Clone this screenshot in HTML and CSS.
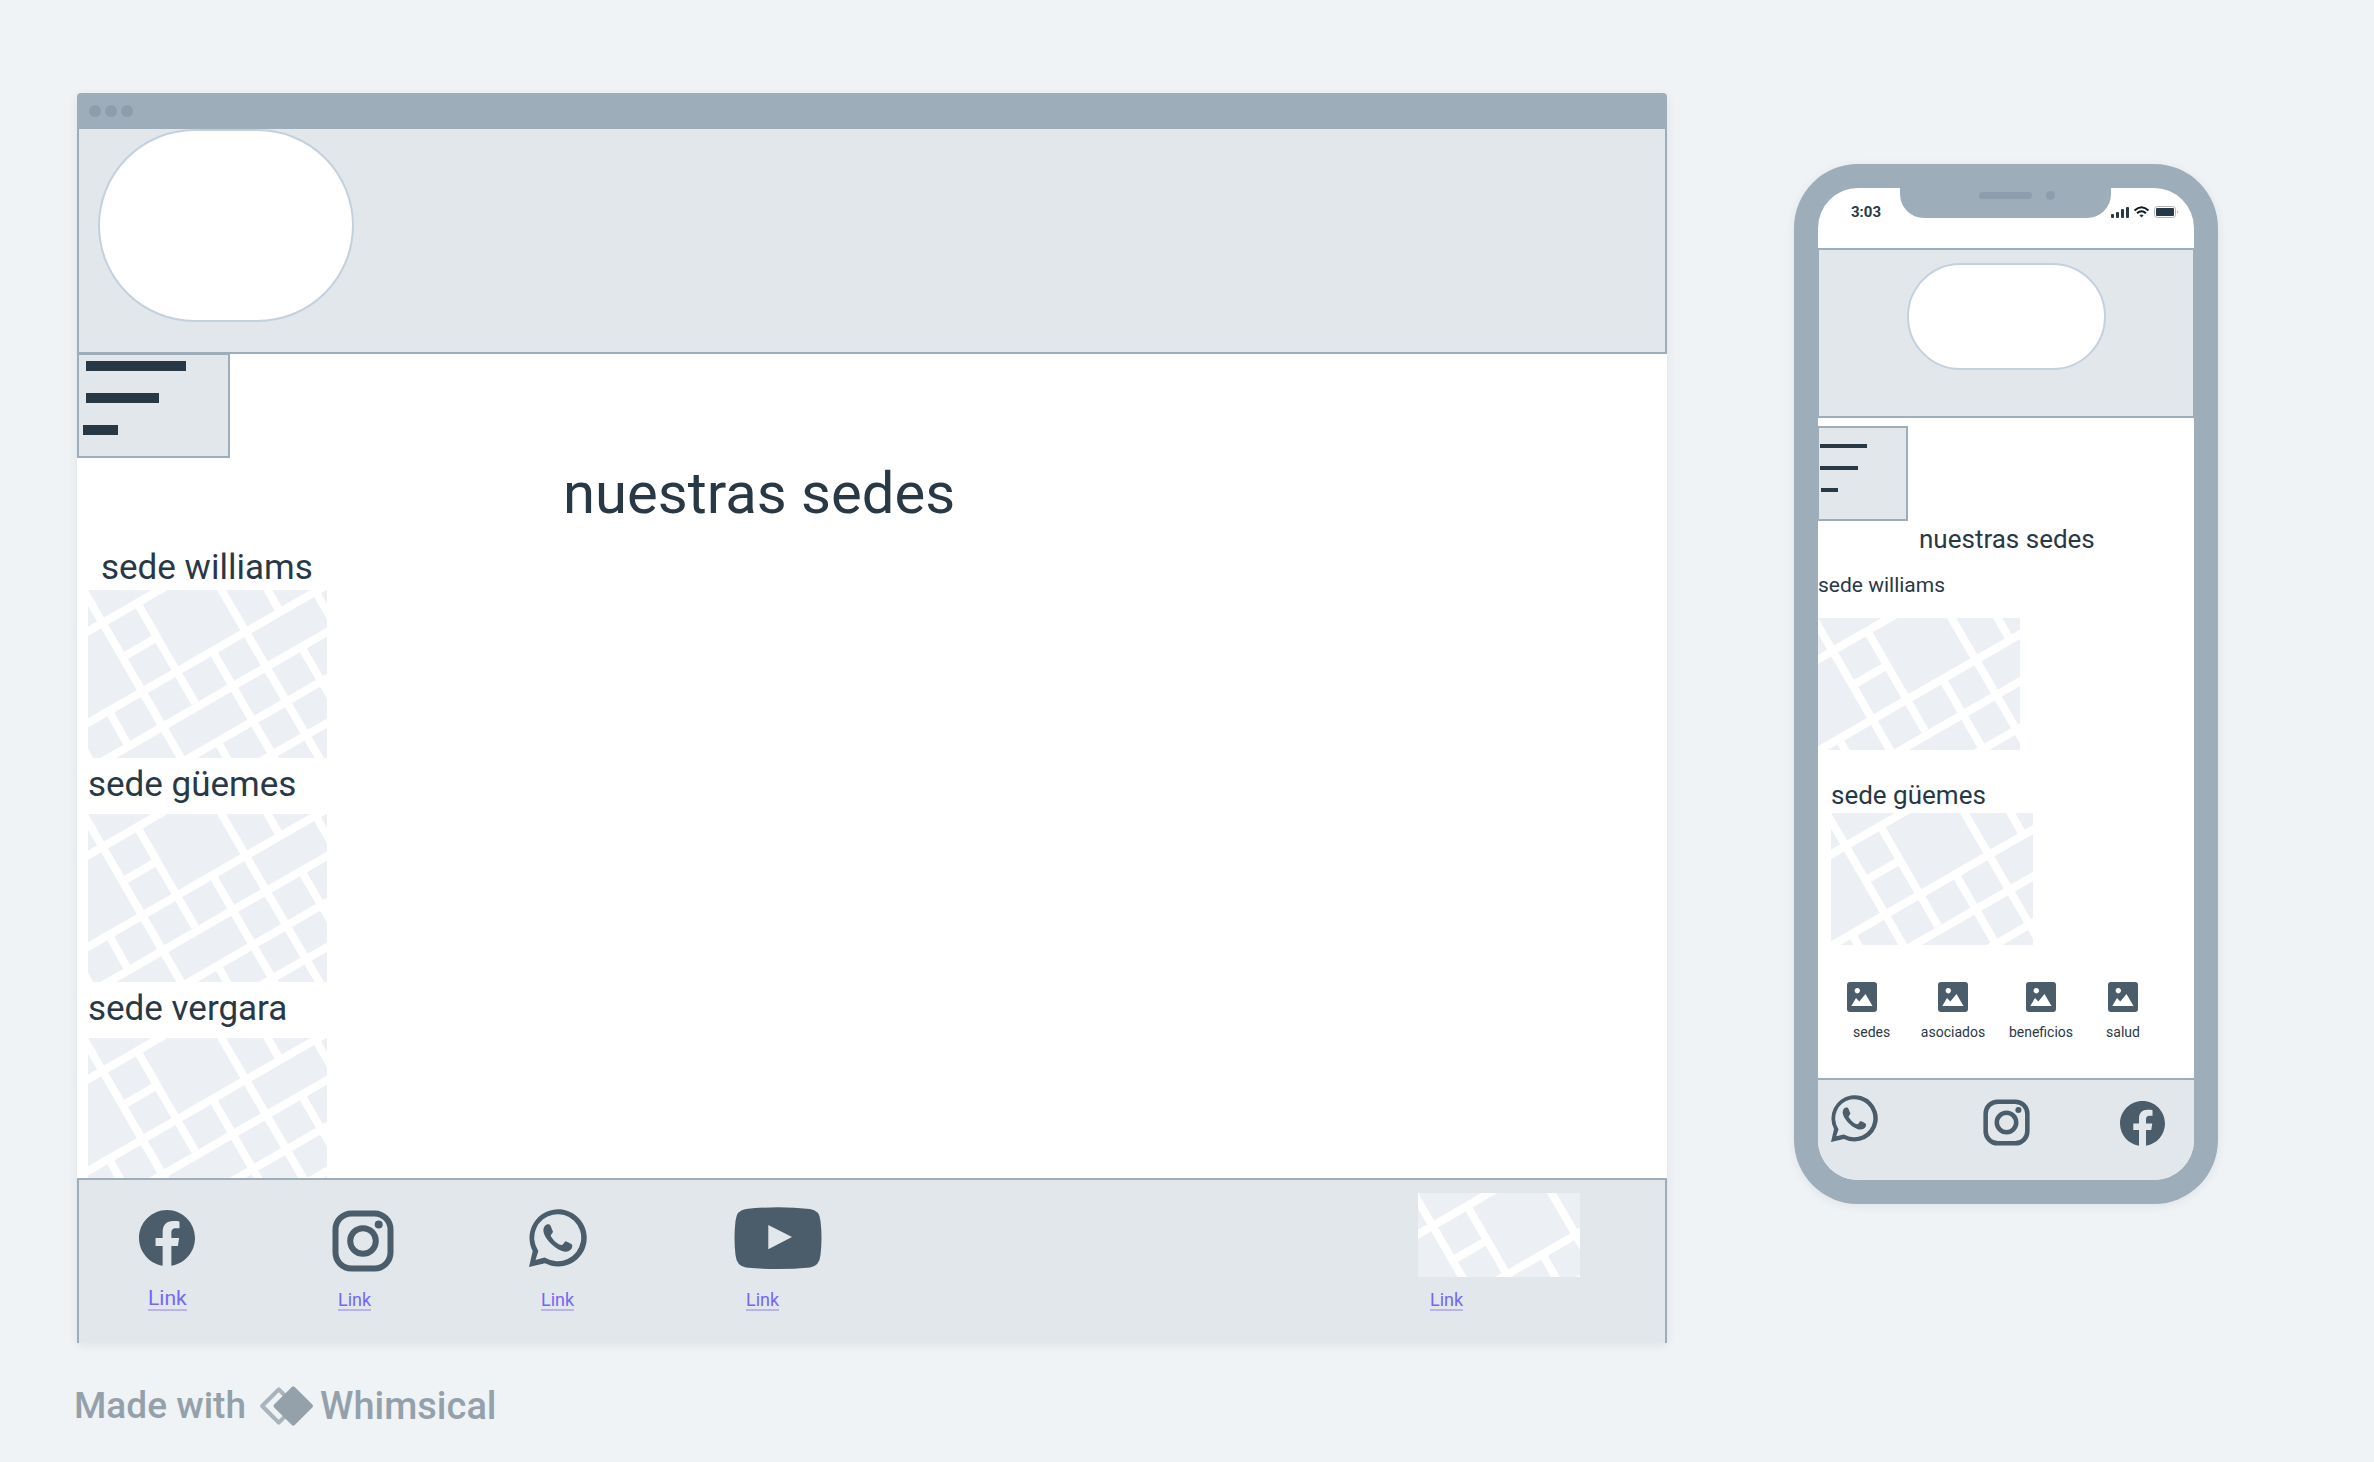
FILE: index.html
```
<!DOCTYPE html>
<html lang="es">
<head>
<meta charset="utf-8">
<title>Nuestras sedes</title>
<meta name="viewport" content="width=device-width, initial-scale=1">
<link rel="stylesheet" href="styles.css">
</head>
<body>
<svg class="defs" aria-hidden="true">
  <symbol id="map" viewBox="0 0 239 168" preserveAspectRatio="xMinYMin slice">
    <rect width="239" height="168" fill="#eceff4"/>
    <g stroke="#fff" stroke-width="8" fill="none">
      <path d="M-7 45.300 83 -6.600M-7 137 239 -5M10 174 246 38M91 174 246 84M167 174.500 246 129M36 66.500 68 48"/>
      <path d="M-8 -6 97 175M51 16 107 113M130 -6 236 176M125.500 63 188 171M178 -3 191 20M226 -1 242 26.500M214 58 242 106M22 123 40 155M130 152 142 174M-4 160 5 176"/>
    </g>
  </symbol>
  <symbol id="facebook" viewBox="2 2 20 20"><path d="M12.001 2.002c-5.522 0-9.999 4.477-9.999 9.999 0 4.990 3.656 9.126 8.437 9.879v-6.988h-2.540v-2.891h2.540V9.798c0-2.508 1.493-3.891 3.776-3.891 1.094 0 2.240.195 2.240.195v2.459h-1.264c-1.240 0-1.628.772-1.628 1.563v1.875h2.771l-.443 2.891h-2.328v6.988C18.344 21.129 22 16.992 22 12.001c0-5.522-4.477-9.999-9.999-9.999z"/></symbol>
  <symbol id="instagram" viewBox="0 0 62 62"><g fill="none" stroke="currentColor" stroke-width="6"><rect x="3.500" y="3.500" width="55" height="55" rx="16"/><circle cx="31" cy="31" r="12.800"/></g><circle cx="46.700" cy="14.600" r="4"/></symbol>
  <symbol id="whatsapp" viewBox="0 0 58 58"><path fill-rule="evenodd" d="M0 58 3.700 42A28.600 28.600 0 1 1 16 54.300ZM6.500 51 15.500 48.600 16.700 48.900A23.500 23.500 0 1 0 9 41.500L9.300 42.300Z"/><path d="M14.400 21.500C14.400 17.500 17 15 19.600 15.300 21.300 15.400 21.700 17 24 22.800 23.300 25 21.500 25.500 21.800 27 24.500 31.500 28.500 35.500 32.500 36 34 36 34.800 33.500 36.400 32.200 38 32.500 41 34.300 43 35.600 44.300 38.500 41.500 42.800 36.500 42.700 28 42.500 14.600 29.500 14.400 21.500Z"/></symbol>
  <symbol id="image" viewBox="0 0 30 30"><path fill-rule="evenodd" d="M3 0H27a3 3 0 0 1 3 3V27a3 3 0 0 1-3 3H3a3 3 0 0 1-3-3V3a3 3 0 0 1 3-3ZM10.300 6a2.700 2.700 0 1 0 .01 0ZM4.300 24H25.500L18.500 12 12.300 19.500 9 16Z"/></symbol>
</svg>

<main class="board">
  <section class="browser">
    <div class="titlebar"><i></i><i></i><i></i></div>
    <header class="hero"><div class="logo"></div></header>
    <div class="content">
      <button class="menu" type="button" aria-label="Menú"><i></i><i></i><i></i></button>
      <h1 class="title">nuestras sedes</h1>
      <div class="offices">
        <h2 class="office office-first">sede williams</h2>
        <svg class="map"><use href="#map" width="239" height="168"/></svg>
        <h2 class="office">sede güemes</h2>
        <svg class="map"><use href="#map" width="239" height="168"/></svg>
        <h2 class="office">sede vergara</h2>
        <svg class="map map-cut"><use href="#map" width="239" height="168"/></svg>
      </div>
    </div>
    <footer class="social">
      <div class="network network-large"><svg class="i-facebook"><use href="#facebook"/></svg><a href="#">Link</a></div>
      <div class="network network-near"><svg class="i-instagram"><use href="#instagram"/></svg><a href="#">Link</a></div>
      <div class="network"><svg class="i-whatsapp"><use href="#whatsapp"/></svg><a href="#">Link</a></div>
      <div class="network"><svg class="i-youtube" viewBox="0 0 88 62"><path fill-rule="evenodd" d="M12 2Q44-1.500 76 2 85.500 3 86.500 14 88.500 31 86.500 48 85.500 59 76 60.500 44 63.500 12 60.500 2.500 59 1.500 48-.5 31 1.500 14 2.500 3 12 2ZM34.300 18V42.300L58 30Z"/></svg><a href="#">Link</a></div>
      <div class="network"><svg class="map map-small"><use href="#map" width="239" height="168"/></svg><a href="#">Link</a></div>
    </footer>
  </section>

  <section class="phone">
    <div class="notch"><i class="speaker"></i><i class="camera"></i></div>
    <div class="screen">
      <div class="status">
        <time>3:03</time>
        <svg class="signals" viewBox="0 0 68 14" fill="#111a23">
          <rect x="0" y="9" width="3" height="4" rx="1"/><rect x="5" y="7" width="3" height="6" rx="1"/><rect x="10" y="4" width="3" height="9" rx="1"/><rect x="15" y="2" width="3" height="11" rx="1"/>
          <g fill="none" stroke="#111a23" stroke-width="2"><path d="M23.500 5.500Q30.500-1 37.500 5.500M26 8.300Q30.500 4.200 35 8.300"/></g><path d="M28.300 10.300Q30.500 8.600 32.700 10.300L30.500 12.500Z"/>
          <rect x="43.500" y="1.500" width="21" height="11" rx="3" fill="none" stroke="#b4b4b4"/><rect x="45" y="3" width="18" height="8" rx="1"/><path d="M66 5.500q2 1.500 0 3Z" fill="#aaa"/>
        </svg>
      </div>
      <header class="hero hero-phone"><div class="logo"></div></header>
      <button class="menu menu-phone" type="button" aria-label="Menú"><i></i><i></i><i></i></button>
      <h2 class="phone-title">nuestras sedes</h2>
      <h3 class="phone-office phone-office-first">sede williams</h3>
      <svg class="map map-phone"><use href="#map" width="239" height="168"/></svg>
      <div class="phone-second">
        <h3 class="phone-office">sede güemes</h3>
        <svg class="map map-phone"><use href="#map" width="239" height="168"/></svg>
      </div>
      <nav class="tabs">
        <a href="#" class="tab tab-first"><svg><use href="#image"/></svg><span>sedes</span></a>
        <a href="#" class="tab"><svg><use href="#image"/></svg><span>asociados</span></a>
        <a href="#" class="tab"><svg><use href="#image"/></svg><span>beneficios</span></a>
        <a href="#" class="tab"><svg><use href="#image"/></svg><span>salud</span></a>
      </nav>
      <footer class="phone-social">
        <svg class="p-whatsapp"><use href="#whatsapp"/></svg>
        <svg class="p-instagram"><use href="#instagram"/></svg>
        <svg class="p-facebook"><use href="#facebook"/></svg>
      </footer>
    </div>
  </section>
</main>

<p class="credit">
  <span>Made with</span>
  <svg viewBox="0 0 54 40"><path d="M20 4 4 20 20 36 36 20Z" fill="none" stroke="#a9b4bd" stroke-width="4" stroke-linejoin="round"/><path d="M34 3 17 20 34 37 51 20Z" fill="#94a1ab" stroke="#94a1ab" stroke-width="4" stroke-linejoin="round"/></svg>
  <span class="brand">Whimsical</span>
</p>
</body>
</html>
```
FILE: styles.css
```
* { box-sizing: border-box; }

body {
  margin: 0;
  background: #eff3f6;
  color: #293845;
  font-family: Roboto, "Liberation Sans", sans-serif;
}

h1, h2, h3, p { margin: 0; font-weight: 400; }
svg { display: block; flex: none; fill: currentColor; }
.defs { position: absolute; width: 0; height: 0; }

.board {
  display: grid;
  grid-template-columns: minmax(0, 1fr) 424px;
  align-items: start;
  gap: 127px;
  padding: 93px 156px 0 77px;
}

/* Browser window */
.browser {
  background: #fff;
  border-radius: 4px 4px 0 0;
  box-shadow: 0 2px 10px rgba(41, 56, 69, .08);
}

.titlebar {
  display: flex;
  align-items: center;
  gap: 4px;
  height: 36px;
  padding-left: 12px;
  background: #9eadba;
  border-radius: 4px 4px 0 0;
}
.titlebar i { width: 12px; height: 12px; border-radius: 50%; background: #8e9dab; }

.hero {
  height: 225px;
  padding-left: 19px;
  background: #e2e7eb;
  border: 2px solid #9eadba;
  border-top-width: 0;
}
.logo {
  width: 256px;
  height: 193px;
  background: #fff;
  border: 2px solid #c4d0dc;
  border-radius: 97px;
}

.menu {
  display: flex;
  flex-direction: column;
  align-items: flex-start;
  gap: 22px;
  width: 153px;
  height: 105px;
  margin: -1px 0 0;
  padding: 6px 7px;
  background: #e2e7eb;
  border: 2px solid #9eadba;
}
.menu i { width: 100px; height: 10px; background: #293845; }
.menu i:nth-child(2) { width: 73px; }
.menu i:nth-child(3) { width: 35px; margin-left: -3px; }

.title {
  padding: 3px 0 22px 486px;
  font-size: 58px;
  line-height: 64px;
}

.offices { padding-left: 11px; }
.office {
  padding: 7px 0 9px;
  font-size: 35px;
  line-height: 40px;
}
.office-first { padding: 1px 0 2px 13px; }

.map { width: 239px; height: 168px; overflow: hidden; }
.map-cut { height: 140px; }
.map-small { width: 162px; height: 84px; }
.map-phone { width: 202px; height: 132px; }

.social {
  display: grid;
  grid-template-columns: 193px 197px 205px minmax(0, 1fr) 162px;
  height: 165px;
  padding: 13px 85px 32px 60px;
  background: #e2e7eb;
  border: 2px solid #9eadba;
  border-bottom: 0;
  color: #4b5c6a;
}
.network {
  display: grid;
  grid-template-rows: 90px 28px;
  justify-items: start;
  align-items: center;
}
.network .map { align-self: start; }
.network a {
  align-self: end;
  margin-left: 12px;
  border-bottom: 2px solid #b9b4f0;
  color: #7367f5;
  font-size: 18px;
  font-weight: 400;
  line-height: 18px;
  text-decoration: none;
}
.network-large a { margin-left: 9px; font-size: 21px; line-height: 22px; }
.network-near a { margin-left: 6px; }
.i-facebook { width: 56px; height: 56px; }
.i-instagram { width: 62px; height: 62px; margin-top: 6px; }
.i-whatsapp { width: 58px; height: 58px; }
.i-youtube { width: 88px; height: 62px; }

/* Phone */
.phone {
  position: relative;
  margin-top: 71px;
  padding: 24px;
  background: #9eadba;
  border-radius: 64px;
  box-shadow: 0 2px 10px rgba(41, 56, 69, .08);
}
.screen {
  overflow: hidden;
  background: #fff;
  border-radius: 40px;
}
.notch {
  position: absolute;
  top: 23px;
  left: 106px;
  width: 211px;
  height: 31px;
  background: #9eadba;
  border-radius: 0 0 24px 24px;
}
.speaker, .camera { position: absolute; top: 5px; background: #8e9dab; }
.speaker { left: 79px; width: 53px; height: 7px; border-radius: 4px; }
.camera { top: 4px; left: 146px; width: 9px; height: 9px; border-radius: 50%; }

.status {
  display: flex;
  justify-content: space-between;
  height: 60px;
  padding: 14px 15px 0 33px;
}
.status time { font-size: 15px; font-weight: 700; line-height: 20px; }
.signals { width: 68px; height: 14px; margin-top: 3px; }

.hero-phone { height: 170px; padding: 13px 0 0 88px; border-width: 2px 1px; }
.hero-phone .logo { width: 199px; height: 107px; border-radius: 54px; }

.menu-phone {
  gap: 18px;
  width: 90px;
  height: 95px;
  margin-top: 8px;
  padding: 16px 1px;
  border-left-width: 1px;
}
.menu-phone i { width: 47px; height: 4px; }
.menu-phone i:nth-child(2) { width: 38px; }
.menu-phone i:nth-child(3) { width: 17px; margin-left: 1px; }

.phone-title {
  padding: 2px 0 0 101px;
  font-size: 26px;
  line-height: 32px;
}
.phone-office { padding-bottom: 2px; font-size: 26px; line-height: 32px; }
.phone-office-first { padding: 18px 0 21px; font-size: 21px; line-height: 24px; }
.phone-second { padding: 29px 0 0 13px; }

.tabs {
  display: grid;
  grid-template-columns: 62px 88px 88px 76px;
  height: 133px;
  padding: 37px 0 0 29px;
}
.tab {
  display: flex;
  flex-direction: column;
  align-items: center;
  gap: 11px;
  color: #293845;
  font-size: 14px;
  line-height: 18px;
  text-decoration: none;
}
.tab svg { width: 30px; height: 30px; color: #4b5c6a; }
.tab-first { align-items: flex-start; }
.tab-first span { padding-left: 6px; }

.phone-social {
  display: flex;
  justify-content: space-between;
  height: 102px;
  padding: 15px 29px 0 13px;
  background: #e2e7eb;
  border-top: 2px solid #9eadba;
  color: #4b5c6a;
}
.p-whatsapp { width: 47px; height: 47px; }
.p-instagram { width: 47px; height: 47px; margin: 4px 0 0 14px; }
.p-facebook { width: 45px; height: 45px; margin-top: 6px; }

.credit {
  display: flex;
  align-items: center;
  gap: 12px;
  padding: 41px 74px 0;
  color: #94a1ab;
  font-size: 37px;
  font-weight: 500;
  line-height: 44px;
}
.credit svg { width: 56px; height: 42px; }
.brand { margin-left: -6px; font-size: 38px; }
```
